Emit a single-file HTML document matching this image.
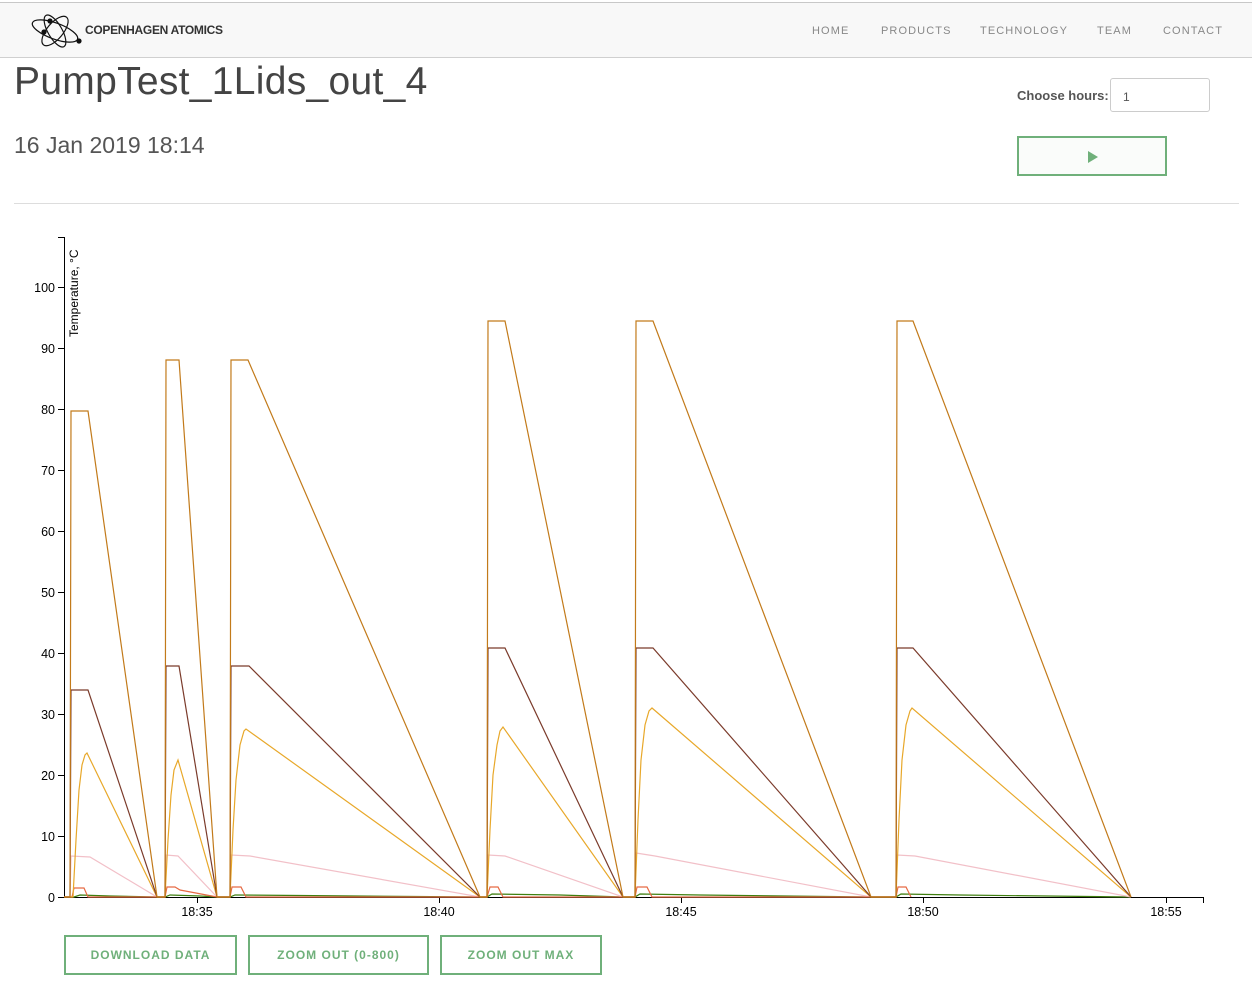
<!DOCTYPE html>
<html><head><meta charset="utf-8"><style>
body{margin:0;background:#fff;font-family:"Liberation Sans",sans-serif;width:1252px;height:988px;overflow:hidden;position:relative}
.nav{position:absolute;left:0;top:2px;width:1252px;height:54px;background:#f8f8f8;border-top:1px solid #c8c8c8;border-bottom:1px solid #d0d0d0}
.brand{position:absolute;left:85px;top:20px;font-size:12px;color:#333;font-weight:bold;letter-spacing:-0.3px}
.nav a{position:absolute;top:22px;font-size:11px;color:#888;letter-spacing:1.1px}
h1{position:absolute;left:14px;top:60px;margin:0;font-weight:300;font-size:39px;color:#444;letter-spacing:0.3px}
.date{position:absolute;left:14px;top:132px;font-size:23px;color:#555;font-weight:300}
.lbl{position:absolute;left:1017px;top:88px;font-size:13px;color:#555;font-weight:bold}
.inp{position:absolute;left:1110px;top:78px;width:100px;height:34px;border:1px solid #ccc;border-radius:3px;box-sizing:border-box;font-size:12px;padding:11px 12px;color:#555}
.play{position:absolute;left:1017px;top:136px;width:150px;height:40px;border:2px solid #6fb07a;box-sizing:border-box;background:#fafcfa}
.play:after{content:"";position:absolute;left:69px;top:13px;border-left:10px solid #6fb07a;border-top:6px solid transparent;border-bottom:6px solid transparent}
.hr{position:absolute;left:14px;top:203px;width:1225px;height:1px;background:#ddd}
.btn{position:absolute;top:935px;height:40px;border:2px solid #6fb07a;box-sizing:border-box;color:#6fb07a;font-size:12px;font-weight:bold;letter-spacing:1px;text-align:center;line-height:36px}
</style></head><body>
<div class="nav">
<svg style="position:absolute;left:30px;top:8px" width="54" height="40" viewBox="0 0 54 40" fill="none" stroke="#111" stroke-width="1.2">
<ellipse cx="25" cy="20" rx="24" ry="8" transform="rotate(20 25 20)"/>
<ellipse cx="25" cy="20" rx="18" ry="8" transform="rotate(-50 25 20)"/>
<ellipse cx="25" cy="20" rx="18" ry="7" transform="rotate(60 25 20)"/>
<circle cx="20" cy="10" r="2" fill="#111"/><circle cx="14" cy="21" r="2" fill="#111"/><circle cx="49" cy="30" r="2" fill="#111"/>
</svg>
<div class="brand">COPENHAGEN ATOMICS</div>
<a style="left:812px">HOME</a><a style="left:881px">PRODUCTS</a><a style="left:980px">TECHNOLOGY</a><a style="left:1097px">TEAM</a><a style="left:1163px">CONTACT</a>
</div>
<h1>PumpTest_1Lids_out_4</h1>
<div class="date">16 Jan 2019 18:14</div>
<div class="lbl">Choose hours:</div>
<div class="inp">1</div>
<div class="play"></div>
<div class="hr"></div>
<svg style="position:absolute;left:0;top:0" width="1252" height="988" font-family="Liberation Sans,sans-serif" font-size="12.5">
<g stroke="#000" fill="none">
<line x1="64.5" y1="237" x2="64.5" y2="898"/><line x1="58" y1="237.5" x2="64" y2="237.5"/>
<line x1="64" y1="897.5" x2="1203" y2="897.5"/><line x1="1203.5" y1="897" x2="1203.5" y2="903"/>
<g>
<line x1="58" y1="287.5" x2="64" y2="287.5"/><line x1="58" y1="348.5" x2="64" y2="348.5"/><line x1="58" y1="409.5" x2="64" y2="409.5"/><line x1="58" y1="470.5" x2="64" y2="470.5"/><line x1="58" y1="531.5" x2="64" y2="531.5"/><line x1="58" y1="592.5" x2="64" y2="592.5"/><line x1="58" y1="653.5" x2="64" y2="653.5"/><line x1="58" y1="714.5" x2="64" y2="714.5"/><line x1="58" y1="775.5" x2="64" y2="775.5"/><line x1="58" y1="836.5" x2="64" y2="836.5"/><line x1="58" y1="897.5" x2="64" y2="897.5"/>
<line x1="197.5" y1="897" x2="197.5" y2="903"/><line x1="439.5" y1="897" x2="439.5" y2="903"/><line x1="681.5" y1="897" x2="681.5" y2="903"/><line x1="923.5" y1="897" x2="923.5" y2="903"/><line x1="1166.5" y1="897" x2="1166.5" y2="903"/>
</g></g>
<g text-anchor="end" fill="#000">
<text x="55" y="292">100</text><text x="55" y="353">90</text><text x="55" y="414">80</text><text x="55" y="475">70</text><text x="55" y="536">60</text><text x="55" y="597">50</text><text x="55" y="658">40</text><text x="55" y="719">30</text><text x="55" y="780">20</text><text x="55" y="841">10</text><text x="55" y="902">0</text>
</g>
<g text-anchor="middle" fill="#000"><text x="197" y="916">18:35</text><text x="439" y="916">18:40</text><text x="681" y="916">18:45</text><text x="923" y="916">18:50</text><text x="1166" y="916">18:55</text></g>
<text transform="translate(78,337) rotate(-90)" font-size="12" fill="#000">Temperature, °C</text>
<g fill="none" stroke-width="1.2">
<polyline stroke="#3f7f10" points="64,897 74,897 80,895 110,896 157,897 165,897 170,895 200,896 217,897 230,897 235,895 300,895.5 480,897 487,897 492,894 560,895 623,897 635,897 640,894 700,895 871,897 896,897 901,894 960,895 1131,897"/>
<polyline stroke="#f2c0c8" points="64,897 70,897 71,856 90,857 157,897 165,897 166,855 178,856 217,897 230,897 231,855 250,856 480,897 487,897 488,855 505,856 623,897 635,897 636,853 655,856 871,897 896,897 897,855 915,856 1131,897"/>
<polyline stroke="#e66a44" points="64,897 72,897 74,888 84,888 88,897 165,897 167,887 175,887 180,890 217,897 230,897 232,887 241,887 246,897 487,897 490,887 498,887 503,897 635,897 637,887 647,887 652,897 896,897 898,887 906,887 911,897"/>
<polyline stroke="#e8a82a" points="64,897 73,897 76,840 79,790 82,765 85,755 87,753 157,897 165,897 168,840 171,795 174,770 178,760 217,897 230,897 233,830 236,780 240,745 244,731 246,729 480,897 487,897 490,830 493,775 497,745 500,731 503,727 623,897 635,897 638,820 641,760 645,725 649,711 652,708 871,897 896,897 899,820 902,760 906,725 910,711 912,708 1131,897"/>
<polyline stroke="#7b3b2b" points="64,897 70,897 71,690 88,690 157,897 165,897 166,666 179,666 217,897 230,897 231,666 249,666 480,897 487,897 488,648 505,648 623,897 635,897 636,648 653,648 871,897 896,897 897,648 913,648 1131,897"/>
<polyline stroke="#c27a1a" points="64,897 70,897 71,411 88,411 157,897 165,897 166,360 179,360 217,897 230,897 231,360 248,360 480,897 487,897 488,321 505,321 623,897 635,897 636,321 653,321 871,897 896,897 897,321 913,321 1131,897"/>
</g>
</svg>
<div class="btn" style="left:64px;width:173px">DOWNLOAD DATA</div>
<div class="btn" style="left:248px;width:181px">ZOOM OUT (0-800)</div>
<div class="btn" style="left:440px;width:162px">ZOOM OUT MAX</div>
</body></html>
